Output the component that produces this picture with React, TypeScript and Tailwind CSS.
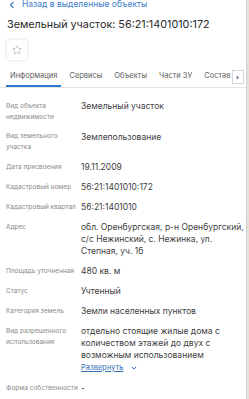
import { Star } from "lucide-react";

type Row = { label: string[]; value: string[]; link?: boolean };

const rows: Row[] = [
  { label: ["Вид объекта", "недвижимости"], value: ["Земельный участок"] },
  { label: ["Вид земельного", "участка"], value: ["Землепользование"] },
  { label: ["Дата присвоения"], value: ["19.11.2009"] },
  { label: ["Кадастровый номер"], value: ["56:21:1401010:172"] },
  { label: ["Кадастровый квартал"], value: ["56:21:1401010"] },
  {
    label: ["Адрес"],
    value: ["обл. Оренбургская, р-н Оренбургский,", "с/с Нежинский, с. Нежинка, ул.", "Степная, уч. 1б"],
  },
  { label: ["Площадь уточненная"], value: ["480 кв. м"] },
  { label: ["Статус"], value: ["Учтенный"] },
  { label: ["Категория земель"], value: ["Земли населенных пунктов"] },
  {
    label: ["Вид разрешенного", "использования"],
    value: ["отдельно стоящие жилые дома с", "количеством этажей до двух с", "возможным использованием"],
    link: true,
  },
  { label: ["Форма собственности"], value: ["-"] },
];

const tabs = ["Информация", "Сервисы", "Объекты", "Части ЗУ", "Состав"];

export default function App() {
  return (
    <div className="flex h-[399px] w-[249px] overflow-hidden bg-[#e6e2d8] font-['Inter',sans-serif]">
      <div className="w-[247px] shrink-0 border-r border-[#cfcfcf] bg-white">
        {/* back link */}
        <div className="flex items-center pl-[9px] text-[8.5px] leading-[9px] text-[#3d7cc9]">
          <svg width="6" height="8" viewBox="0 0 6 8" className="mr-[7px]">
            <path d="M4.5 1 L1.5 4 L4.5 7" fill="none" stroke="currentColor" strokeWidth="1.2" />
          </svg>
          Назад в выделенные объекты
        </div>

        <h1 className="mt-[9px] pl-[7px] text-[10.8px] leading-[14px] text-[#2a2a2a]">
          Земельный участок: 56:21:1401010:172
        </h1>

        <div className="ml-[7px] mt-[8px] flex h-[20px] w-[20px] items-center justify-center rounded-[2px] bg-white shadow-[0_0_3px_rgba(0,0,0,0.18)]">
          <Star size={10} strokeWidth={1.3} className="text-[#9a9a9a]" />
        </div>

        {/* tabs */}
        <div className="flex border-b border-[#e3e3e3]">
          <div className="flex min-w-0 flex-1 gap-[4px] overflow-hidden pl-[6px]">
            {tabs.map((t, i) => (
              <div
                key={t}
                className={
                  "shrink-0 whitespace-nowrap border-b-2 px-[4px] pb-[3px] pt-[10px] text-[7.5px] leading-[12px] text-[#606060] " +
                  (i === 0 ? "border-[#2b7bd0]" : "border-transparent")
                }
              >
                {t}
              </div>
            ))}
          </div>
          <div className="ml-[1px] mr-[2px] mt-[10px] flex h-[14px] w-[12px] shrink-0 items-center justify-center border border-[#d6d6d6] bg-white">
            <svg width="4" height="5" viewBox="0 0 4 5">
              <path d="M0.5 0.5 L3.5 2.5 L0.5 4.5 Z" fill="#7b8fa8" />
            </svg>
          </div>
        </div>

        {/* info rows */}
        <div className="flex flex-col gap-[8px] pl-[6px] pt-[12px]">
          {rows.map((r) => (
            <div key={r.label[0]} className="grid grid-cols-[75px_1fr]">
              <div className="pt-[0.5px] text-[6.5px] leading-[11px] text-[#8a8a8a]">
                {r.label.map((l) => (
                  <div key={l}>{l}</div>
                ))}
              </div>
              <div className="text-[8.5px] leading-[12px] text-[#404040]">
                {r.value.map((v) => (
                  <div key={v} className="whitespace-nowrap">
                    {v}
                  </div>
                ))}
                {r.link && (
                  <div className="mt-[1px] flex items-center gap-[8px] text-[7.5px] text-[#2f6fb8]">
                    <span className="underline">Развернуть</span>
                    <svg width="6" height="4" viewBox="0 0 6 4">
                      <path d="M0.8 0.8 L3 3 L5.2 0.8" fill="none" stroke="currentColor" strokeWidth="1" />
                    </svg>
                  </div>
                )}
              </div>
            </div>
          ))}
        </div>
      </div>
      <div className="flex-1" />
    </div>
  );
}
